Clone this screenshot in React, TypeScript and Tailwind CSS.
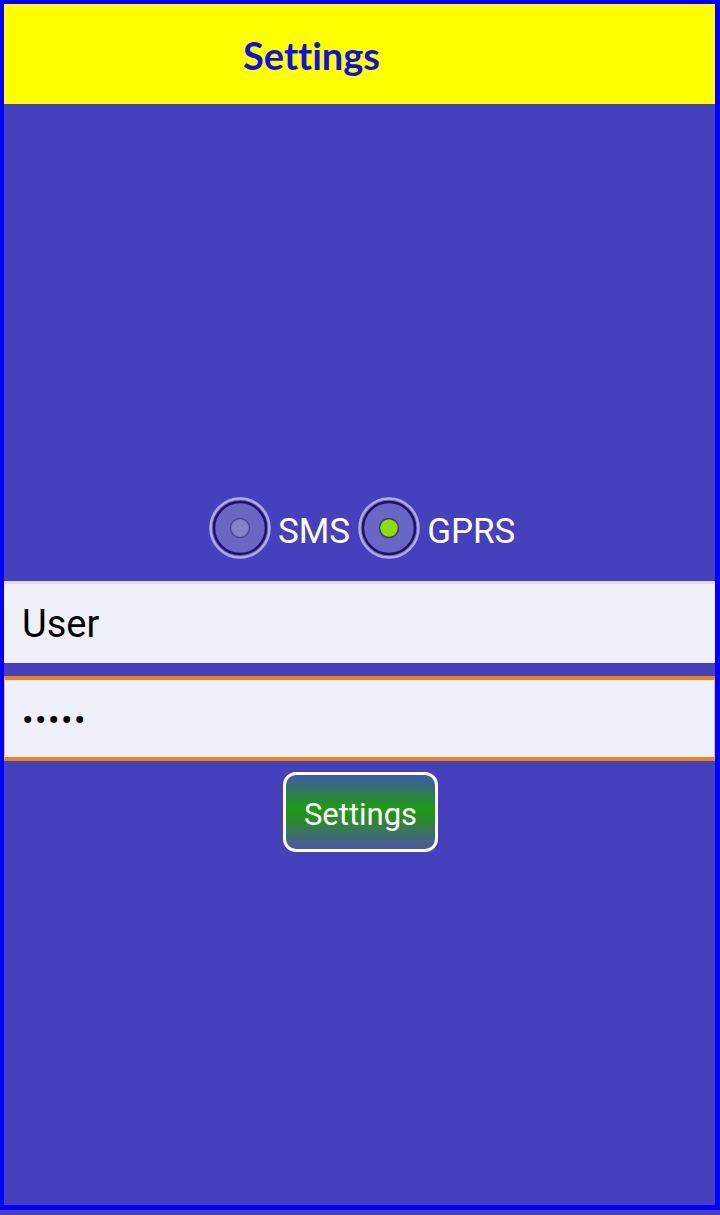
import React from "react";

function Radio({ checked }: { checked: boolean }) {
  return (
    <svg width="62" height="62" viewBox="0 0 62 62">
      <circle cx="31" cy="31" r="29.5" fill="#6a66c6" stroke="#aeaae6" strokeWidth="2.5" />
      <circle cx="31" cy="31" r="26" fill="none" stroke="#1c1460" strokeWidth="2.5" />
      {checked ? (
        <circle cx="31" cy="31" r="9.5" fill="#8edc0c" stroke="#3a3a70" strokeWidth="1.5" />
      ) : (
        <circle cx="31" cy="31" r="9.5" fill="#8482c8" stroke="#4c4896" strokeWidth="1.5" />
      )}
    </svg>
  );
}

export default function App() {
  return (
    <div className="w-[720px] h-[1215px] bg-[#4640bc]" style={{ fontFamily: "Roboto, 'Noto Sans', sans-serif" }}>
      <div className="w-[720px] h-[1210px] border-t-[4px] border-l-[4px] border-b-[5px] border-r-[5px] border-[#0000ff] bg-[#4640bc] flex flex-col">
        <div className="h-[100px] bg-[#ffff00] flex items-center pl-[239px]">
          <span
            className="text-[38px] font-bold text-[#1010e6] tracking-[0px] leading-none pt-[2px] [font-variant-ligatures:none]"
            style={{ fontFamily: "Lato, 'Open Sans', sans-serif" }}
          >
            Settings
          </span>
        </div>
        <div className="flex flex-col">
          <div className="mt-[393px] h-[62px] flex items-center pl-[205px]">
            <Radio checked={false} />
            <span className="text-white text-[35px] ml-[7px] leading-none pt-[6px]">SMS</span>
            <div className="ml-[8px]">
              <Radio checked={true} />
            </div>
            <span className="text-white text-[35px] ml-[7px] leading-none pt-[6px]">GPRS</span>
          </div>
          <div className="mt-[22px] h-[82px] bg-[#f0f0fa] flex items-center pl-[18px] border-t-[3px] border-[#dcdcee]">
            <span className="text-black text-[38px] leading-none">User</span>
          </div>
          <div className="mt-[13px] h-[85px] bg-[#f0f0fa] border-y-[4px] border-x border-[#f28118] border-x-[#f6b878] flex items-center pl-[17px]">
            <span className="text-black text-[34px] leading-none tracking-[1.5px] pt-[2px]">•••••</span>
          </div>
          <div className="mt-[11px] flex justify-center pl-[2px]">
            <div
              className="w-[155px] h-[80px] rounded-[13px] border-[3px] border-white flex items-center justify-center"
              style={{ background: "linear-gradient(to bottom, #3e5aa8 0%, #1f9a12 45%, #2b8a2a 60%, #4a58a8 100%)" }}
            >
              <span className="text-white text-[31px] leading-none pt-[4px]">Settings</span>
            </div>
          </div>
        </div>
      </div>
    </div>
  );
}
